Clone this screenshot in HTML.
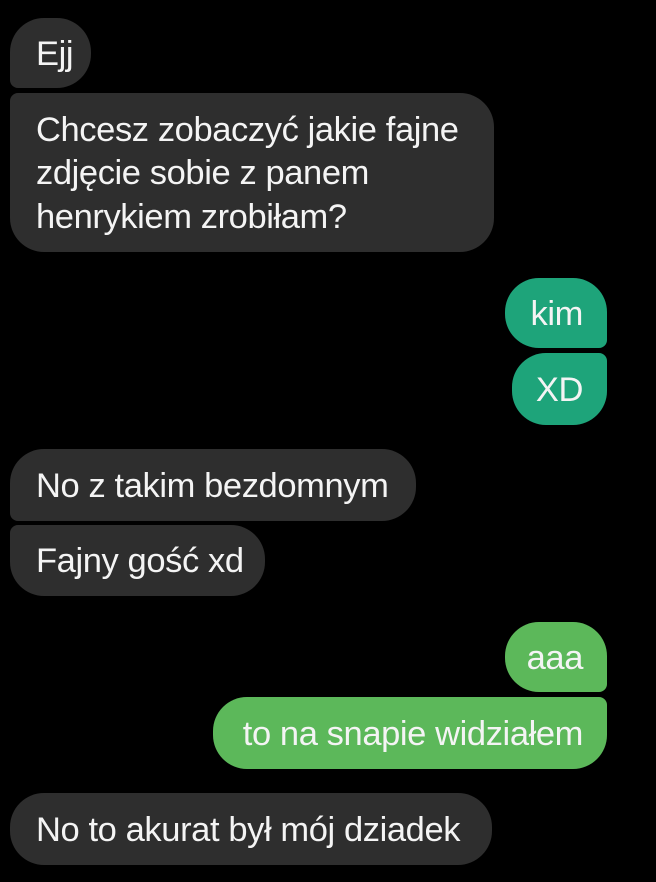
<!DOCTYPE html>
<html><head><meta charset="utf-8"><style>
html,body{margin:0;padding:0;background:#000;width:656px;height:882px;overflow:hidden}
.b{position:absolute;box-sizing:border-box;color:#f4f4f4;font-family:"Liberation Sans",sans-serif;font-size:34.5px;line-height:43.5px;border-radius:34px;display:flex;align-items:center;white-space:nowrap;letter-spacing:-0.4px;padding-top:3px}
.g{background:#2e2e2e;padding-left:26px}
.t{background:#1ea47a;justify-content:flex-end;padding-right:24px}
.l{background:#5cb85a;justify-content:flex-end;padding-right:24px}
</style></head><body>
<div class="b g" style="left:10px;top:18px;width:81px;height:70px;border-bottom-left-radius:8px">Ejj</div>
<div class="b g" style="left:10px;top:93px;width:484px;height:159px;border-top-left-radius:8px;white-space:normal;line-height:43.5px">Chcesz zobaczyć jakie fajne<br>zdjęcie sobie z panem<br>henrykiem zrobiłam?</div>
<div class="b t" style="left:505px;top:278px;width:102px;height:70px;border-bottom-right-radius:8px">kim</div>
<div class="b t" style="left:512px;top:353px;width:95px;height:72px;border-top-right-radius:8px">XD</div>
<div class="b g" style="left:10px;top:449px;width:406px;height:72px;border-bottom-left-radius:8px">No z takim bezdomnym</div>
<div class="b g" style="left:10px;top:525px;width:255px;height:71px;border-top-left-radius:8px">Fajny gość xd</div>
<div class="b l" style="left:505px;top:622px;width:102px;height:70px;border-bottom-right-radius:8px">aaa</div>
<div class="b l" style="left:213px;top:697px;width:394px;height:72px;border-top-right-radius:8px">to na snapie widziałem</div>
<div class="b g" style="left:10px;top:793px;width:482px;height:72px">No to akurat był mój dziadek</div>
</body></html>
